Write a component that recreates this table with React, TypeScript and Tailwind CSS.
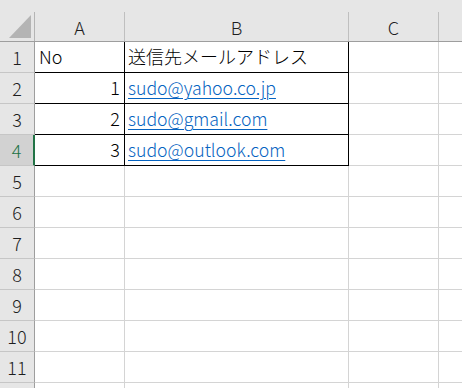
import React from "react";

const font = { fontFamily: '"Noto Sans CJK JP", "Noto Sans", sans-serif' };

function RowHeader({ n, selected }: { n: number; selected?: boolean }) {
  return selected ? (
    <div className="w-[35px] h-[31px] shrink-0 bg-[#d2d2d2] border-b border-b-[#c6c6c6] border-r-2 border-r-[#217346] flex items-center justify-center text-[#217346] text-[18px] leading-none font-light">
      {n}
    </div>
  ) : (
    <div className="w-[35px] h-[31px] shrink-0 bg-[#e6e6e6] border-b border-b-[#c6c6c6] border-r border-r-[#9e9e9e] flex items-center justify-center text-[#1e1e1e] text-[18px] leading-none font-light">
      {n > 11 ? "" : n}
    </div>
  );
}

function Link({ children }: { children: React.ReactNode }) {
  return (
    <span className="text-[#0563c1] underline underline-offset-[3px] decoration-[1px] text-[17.7px] font-light">{children}</span>
  );
}

const data: { a: React.ReactNode; aRight?: boolean; b: React.ReactNode }[] = [
  { a: "No", b: "送信先メールアドレス" },
  { a: "1", aRight: true, b: <Link>sudo@yahoo.co.jp</Link> },
  { a: "2", aRight: true, b: <Link>sudo@gmail.com</Link> },
  { a: "3", aRight: true, b: <Link>sudo@outlook.com</Link> },
];

export default function App() {
  const rows = [];
  for (let i = 1; i <= 12; i++) {
    const d = data[i - 1];
    rows.push(
      <div key={i} className="flex">
        <RowHeader n={i} selected={i === 4} />
        {d ? (
          <>
            <div
              className={
                "w-[90px] h-[31px] shrink-0 border-r border-b border-black flex items-end pb-[5px] text-[18px] leading-none text-black font-light " +
                (d.aRight ? "justify-end pr-[4px]" : "justify-start pl-[4px]")
              }
            >
              <span className="leading-[22px]">{d.a}</span>
            </div>
            <div className="w-[224px] h-[31px] shrink-0 border-r border-b border-black flex items-end pb-[5px] pl-[3px] text-[18px] leading-none text-black whitespace-nowrap font-light">
              <span className="leading-[22px]">{d.b}</span>
            </div>
          </>
        ) : (
          <>
            <div className="w-[90px] h-[31px] shrink-0 border-r border-b border-[#d4d4d4]" />
            <div className="w-[224px] h-[31px] shrink-0 border-r border-b border-[#d4d4d4]" />
          </>
        )}
        <div className="w-[90px] h-[31px] shrink-0 border-r border-b border-[#d4d4d4]" />
        <div className="flex-1 h-[31px] border-b border-[#d4d4d4]" />
      </div>
    );
  }

  return (
    <div className="w-[462px] h-[388px] overflow-hidden bg-white" style={font}>
      <div className="flex h-[42px] bg-[#e6e6e6] border-b border-[#9e9e9e]">
        <div className="w-[35px] shrink-0 flex flex-col">
          <div className="h-[12px]" />
          <div className="flex-1 border-r border-[#b4b4b4]">
            <svg width="34" height="29" viewBox="0 0 34 29" className="block">
              <polygon points="9,26 31,26 31,3" fill="#b4b4b4" />
            </svg>
          </div>
        </div>
        {[
          { l: "A", w: "w-[90px]" },
          { l: "B", w: "w-[224px]" },
          { l: "C", w: "w-[90px]" },
        ].map((c) => (
          <div key={c.l} className={c.w + " shrink-0 flex flex-col"}>
            <div className="h-[12px]" />
            <div className="flex-1 border-r border-[#bfbfbf] flex items-center justify-center text-[18px] leading-none text-[#1e1e1e] font-light">
              {c.l}
            </div>
          </div>
        ))}
        <div className="flex-1" />
      </div>
      {rows}
    </div>
  );
}
